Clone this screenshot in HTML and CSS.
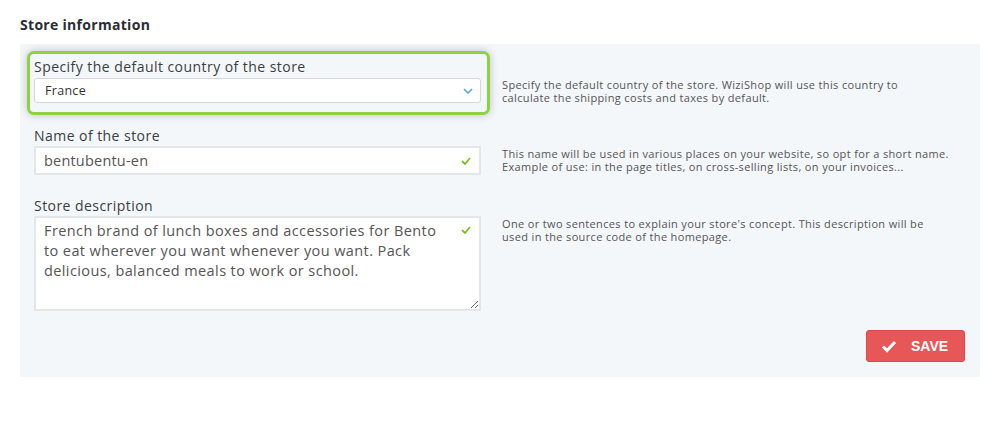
FILE: index.html
```html
<!DOCTYPE html>
<html lang="en">
<head>
    <meta charset="UTF-8">
    <title>Store information</title>
    <link rel="stylesheet" href="styles.css">
</head>
<body>
    <div class="page">
        <h2 class="title">Store information</h2>

        <div class="panel">
            <div class="row">
                <div class="highlight">
                    <label class="label">Specify the default country of the store</label>
                    <div class="select">
                        <span>France</span>
                        <svg width="10" height="6" viewBox="0 0 10 6"><path d="M1 1l4 4 4-4" fill="none" stroke="#5aa5d8" stroke-width="1.6"/></svg>
                    </div>
                </div>
                <p class="help">Specify the default country of the store. WiziShop will use this country to<br>calculate the shipping costs and taxes by default.</p>
            </div>

            <div class="row">
                <div class="field">
                    <label class="label">Name of the store</label>
                    <div class="control">
                        <input class="input" type="text" value="bentubentu-en">
                        <svg class="ok" width="10" height="8" viewBox="0 0 10 8"><path d="M1 4l3 3 5-6" fill="none" stroke="#7cc01c" stroke-width="1.8"/></svg>
                    </div>
                </div>
                <p class="help">This name will be used in various places on your website, so opt for a short name.<br>Example of use: in the page titles, on cross-selling lists, on your invoices...</p>
            </div>

            <div class="row">
                <div class="field">
                    <label class="label">Store description</label>
                    <div class="control">
                        <textarea class="textarea">French brand of lunch boxes and accessories for Bento to eat wherever you want whenever you want. Pack delicious, balanced meals to work or school.</textarea>
                        <svg class="ok ok-top" width="10" height="8" viewBox="0 0 10 8"><path d="M1 4l3 3 5-6" fill="none" stroke="#7cc01c" stroke-width="1.8"/></svg>
                    </div>
                </div>
                <p class="help">One or two sentences to explain your store's concept. This description will be<br>used in the source code of the homepage.</p>
            </div>

            <div class="actions">
                <button class="save">
                    <svg width="16" height="13" viewBox="0 0 16 13"><path d="M2 6.5l4 4 8-8.5" fill="none" stroke="#fff" stroke-width="3"/></svg>
                    SAVE
                </button>
            </div>
        </div>
    </div>
</body>
</html>
```

FILE: styles.css
```css
body {
    margin: 0;
    background: #fff;
    font-family: 'Open Sans', 'Liberation Sans', sans-serif;
    color: #333;
}
.page {
    padding: 15px 27px 0 20px;
}
.title {
    margin: 0 0 10px;
    font-size: 14px;
    line-height: 19px;
    font-weight: 700;
    letter-spacing: 0.3px;
    color: #2a2e33;
}
.panel {
    background: #f4f7fa;
    padding: 13px 14px 15px 14px;
    display: flex;
    flex-direction: column;
    gap: 21px;
}
.row {
    display: grid;
    grid-template-columns: 447px 1fr;
    column-gap: 21px;
    align-items: start;
}
.highlight {
    margin: -6px -9px -10px -7px;
    padding: 3px 6px 9px 4px;
    border: 3px solid #8ed33f;
    border-radius: 7px;
    box-shadow: 0 0 8px rgba(0,0,0,0.22);
    background: #f4f7fa;
}
.label {
    display: block;
    height: 20px;
    font-size: 14px;
    line-height: 20px;
    letter-spacing: 0.45px;
    color: #3a3d40;
}
.select {
    margin-top: 1px;
    height: 23px;
    border: 1px solid #d4d8dc;
    border-radius: 3px;
    background: #fff;
    display: flex;
    align-items: center;
    justify-content: space-between;
    padding: 0 7px 0 10px;
    font-size: 12.5px;
    letter-spacing: 0.3px;
    color: #333;
}
.control {
    position: relative;
}
.input {
    display: block;
    box-sizing: border-box;
    width: 100%;
    height: 29px;
    border: 2px solid #e4e7ea;
    padding: 0 30px 0 8px;
    font-family: inherit;
    font-size: 14.5px;
    letter-spacing: 0.2px;
    color: #555;
    background: #fff;
    outline: none;
}
.textarea {
    display: block;
    box-sizing: border-box;
    width: 100%;
    height: 95px;
    border: 2px solid #e4e7ea;
    padding: 3px 26px 0 8px;
    font-family: inherit;
    font-size: 14.5px;
    line-height: 20px;
    letter-spacing: 0.4px;
    color: #555;
    background: #fff;
    outline: none;
}
.ok {
    position: absolute;
    right: 10px;
    top: 11px;
}
.ok-top {
    top: 10px;
}
.help {
    margin: 21px 0 0;
    font-size: 11px;
    line-height: 13px;
    letter-spacing: 0.35px;
    color: #555;
}
.actions {
    display: flex;
    justify-content: flex-end;
    padding-right: 1px;
    margin-top: -2px;
}
.save {
    width: 99px;
    height: 32px;
    background: #e85757;
    border: 1px solid #e04848;
    border-radius: 3px;
    color: #fff;
    font-family: 'Liberation Sans', sans-serif;
    font-weight: 700;
    font-size: 14px;
    display: flex;
    align-items: center;
    gap: 14px;
    padding: 0 0 0 14px;
    cursor: pointer;
}
```
